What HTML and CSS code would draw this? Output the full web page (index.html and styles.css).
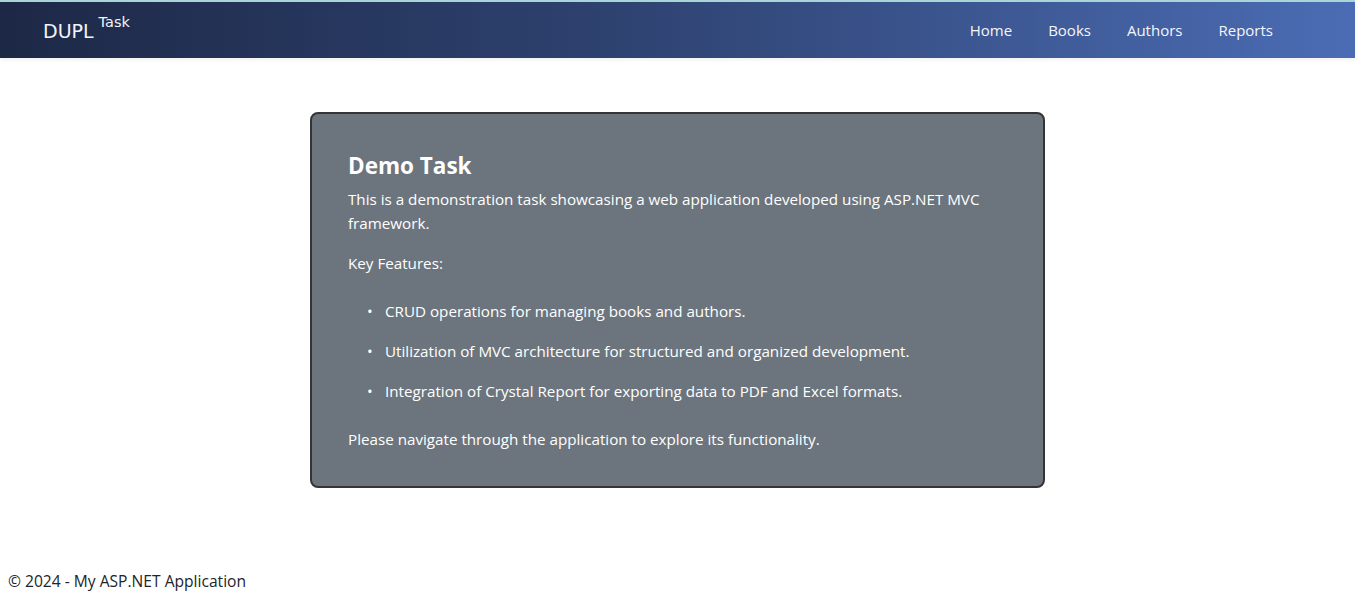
FILE: index.html
```html
<!DOCTYPE html>
<html lang="en">
<head>
<meta charset="utf-8">
<title>Home Page - My ASP.NET Application</title>
<link rel="stylesheet" href="styles.css">
</head>
<body>
<div class="page">
  <header class="navbar">
    <a class="brand" href="#">DUPL <sup class="brand-sup">Task</sup></a>
    <nav class="nav">
      <a class="nav-link" href="#">Home</a>
      <a class="nav-link" href="#">Books</a>
      <a class="nav-link" href="#">Authors</a>
      <a class="nav-link" href="#">Reports</a>
    </nav>
  </header>
  <main class="main">
    <section class="card">
      <h2 class="card-title">Demo Task</h2>
      <p class="text">This is a demonstration task showcasing a web application developed using ASP.NET MVC framework.</p>
      <p class="text">Key Features:</p>
      <ul class="features">
        <li>CRUD operations for managing books and authors.</li>
        <li>Utilization of MVC architecture for structured and organized development.</li>
        <li>Integration of Crystal Report for exporting data to PDF and Excel formats.</li>
      </ul>
      <p class="text last">Please navigate through the application to explore its functionality.</p>
    </section>
  </main>
  <footer class="footer">
    <p>&copy; 2024 - My ASP.NET Application</p>
  </footer>
</div>
</body>
</html>
```

FILE: styles.css
```css
* { box-sizing: border-box; }
html, body { margin: 0; padding: 0; background: #fff; }
body {
  font-family: "Open Sans", "Noto Sans", sans-serif;
  font-size: 15.2px;
  color: #212529;
}
.page { width: 1355px; }
.navbar {
  height: 58px;
  border-top: 2px solid #a9d5d8;
  background: linear-gradient(to right, #1d2846 0%, #2e4270 45%, #4b6cb4 100%);
  box-shadow: 0 2px 4px rgba(0,0,0,0.06);
  display: flex;
  align-items: center;
  justify-content: space-between;
  padding: 0 82px 0 43px;
}
.brand {
  color: #f2f4f8;
  text-decoration: none;
  font-family: "DejaVu Sans", sans-serif;
  font-size: 19px;
  display: flex;
  align-items: flex-start;
  margin-top: 2px;
}
.brand-sup {
  font-size: 14.5px;
  margin-left: 5px;
  position: relative;
  top: -6px;
  vertical-align: baseline;
}
.nav { display: flex; gap: 36px; }
.nav-link {
  color: #f4f6fa;
  text-decoration: none;
  font-size: 15px;
}
.main {
  display: flex;
  justify-content: center;
  padding-top: 54px;
}
.card {
  width: 735px;
  background: #6c757d;
  border: 2px solid #343434;
  border-radius: 8px;
  padding: 37px 36px 35px;
  color: #fff;
}
.card-title {
  margin: 0 0 7px;
  font-size: 22.5px;
  font-weight: 700;
  line-height: 29px;
}
.text { margin: 0 0 16px; line-height: 24px; }
.text.last { margin-bottom: 0; }
.features {
  margin: 0 0 16px;
  padding-left: 19px;
  list-style: none;
}
.features li { padding: 8px 0; line-height: 24px; display: flex; }
.features li::before {
  content: "\2022";
  flex: 0 0 18px;
}
.footer {
  padding: 81px 8px 0;
}
.footer p { margin: 0; line-height: 24px; font-size: 15.6px; }
```
